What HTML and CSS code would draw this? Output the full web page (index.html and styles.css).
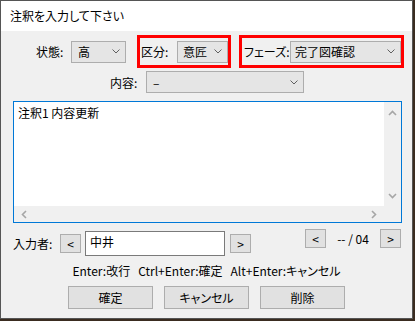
FILE: index.html
```html
<!DOCTYPE html>
<html lang="ja">
<head>
    <meta charset="UTF-8">
    <meta name="viewport" content="width=device-width, initial-scale=1.0">
    <title>注釈を入力して下さい</title>
    <link rel="stylesheet" href="styles.css">
</head>
<body>
    <div class="dialog">
        <div class="titlebar">注釈を入力して下さい</div>

        <div class="content">
            <div class="row row-top">
                <div class="field field-state">
                    <span class="label">状態:</span>
                    <div class="combo combo-state">
                        <span>高</span>
                        <svg class="chevron" width="8" height="5" viewBox="0 0 8 5"><polyline points="0.5,0.5 4,4 7.5,0.5"/></svg>
                    </div>
                </div>
                <div class="field mark mark-kind">
                    <span class="label">区分:</span>
                    <div class="combo combo-kind">
                        <span>意匠</span>
                        <svg class="chevron" width="8" height="5" viewBox="0 0 8 5"><polyline points="0.5,0.5 4,4 7.5,0.5"/></svg>
                    </div>
                </div>
                <div class="field mark mark-phase">
                    <span class="label label-phase">フェーズ:</span>
                    <div class="combo combo-phase">
                        <span>完了図確認</span>
                        <svg class="chevron" width="8" height="5" viewBox="0 0 8 5"><polyline points="0.5,0.5 4,4 7.5,0.5"/></svg>
                    </div>
                </div>
            </div>

            <div class="row row-body">
                <span class="label">内容:</span>
                <div class="combo combo-body">
                    <span>–</span>
                    <svg class="chevron" width="8" height="5" viewBox="0 0 8 5"><polyline points="0.5,0.5 4,4 7.5,0.5"/></svg>
                </div>
            </div>

            <div class="memo">
                <div class="memo-text">注釈1 内容更新</div>
                <div class="vscroll">
                    <svg class="arrow" width="9" height="6" viewBox="0 0 9 6"><polyline points="1,5 4.5,1.5 8,5"/></svg>
                    <svg class="arrow" width="9" height="6" viewBox="0 0 9 6"><polyline points="1,1 4.5,4.5 8,1"/></svg>
                </div>
                <div class="hscroll">
                    <svg class="arrow" width="6" height="9" viewBox="0 0 6 9"><polyline points="5,1 1.5,4.5 5,8"/></svg>
                    <svg class="arrow" width="6" height="9" viewBox="0 0 6 9"><polyline points="1,1 4.5,4.5 1,8"/></svg>
                </div>
                <div class="corner"></div>
            </div>

            <div class="row row-author">
                <div class="author">
                    <span class="label label-author">入力者:</span>
                    <button class="nav">&lt;</button>
                    <div class="name">中井</div>
                    <button class="nav">&gt;</button>
                </div>
                <div class="pager">
                    <button class="nav">&lt;</button>
                    <span class="count">-- / 04</span>
                    <button class="nav">&gt;</button>
                </div>
            </div>

            <div class="hint">Enter:改行&nbsp;&nbsp; Ctrl+Enter:確定&nbsp;&nbsp; Alt+Enter:キャンセル</div>

            <div class="actions">
                <button class="action">確定</button>
                <button class="action">キャンセル</button>
                <button class="action">削除</button>
            </div>
        </div>
    </div>
</body>
</html>
```

FILE: styles.css
```css
* {
    margin: 0;
    padding: 0;
    box-sizing: border-box;
}

body {
    background-color: #3a2c20;
    font-family: 'Noto Sans CJK JP', 'Noto Sans', sans-serif;
    font-size: 12px;
    font-feature-settings: "palt";
    color: #000;
}

button {
    font: inherit;
    color: inherit;
}

.dialog {
    width: 413px;
    height: 319px;
    background-color: #f0f0f0;
    border: 1px solid #555;
}

.titlebar {
    height: 30px;
    line-height: 30px;
    padding-left: 9px;
    background-color: #fff;
}

.row {
    display: flex;
    align-items: center;
}

.label {
    white-space: nowrap;
}

/* top row: state / kind / phase */
.row-top {
    margin-top: 4px;
    padding-left: 35px;
}

.field {
    display: flex;
    align-items: center;
}

.field .label {
    width: 32px;
}

.field-state .combo {
    margin-left: 3px;
}

.mark {
    height: 33px;
    border: 3px solid #f00;
}

.mark .combo {
    margin-left: 4px;
}

.mark-kind {
    margin-left: 11px;
    padding-left: 1px;
}

.mark-phase {
    margin-left: 8px;
    padding-left: 2px;
}

.mark-phase .label {
    width: 42px;
}

.combo {
    display: flex;
    align-items: center;
    justify-content: space-between;
    height: 22px;
    padding: 0 5px 0 6px;
    background-color: #e5e5e5;
    border: 1px solid #adadad;
}

.combo-state {
    width: 55px;
}

.combo-kind {
    width: 51px;
    padding-left: 5px;
}

.combo-phase {
    width: 111px;
    padding-left: 4px;
}

.combo-body {
    width: 158px;
}

.chevron polyline {
    fill: none;
    stroke: #606060;
    stroke-width: 1;
}

/* second row */
.row-body {
    margin-top: 3px;
    padding-left: 109px;
    gap: 4px;
}

.row-body .label {
    width: 32px;
}

/* memo box */
.memo {
    display: grid;
    grid-template-columns: 1fr 17px;
    grid-template-rows: 1fr 16px;
    width: 389px;
    height: 122px;
    margin: 8px 0 0 12px;
    background-color: #fff;
    border: 1px solid #0078d7;
}

.memo-text {
    padding: 3px 4px;
    line-height: 16px;
}

.vscroll {
    display: flex;
    flex-direction: column;
    justify-content: space-between;
    align-items: center;
    padding: 8px 0 7px;
    background-color: #f0f0f0;
}

.hscroll {
    display: flex;
    justify-content: space-between;
    align-items: center;
    padding: 0 7px;
    background-color: #f0f0f0;
}

.corner {
    background-color: #f0f0f0;
}

.arrow polyline {
    fill: none;
    stroke: #a6a6a6;
    stroke-width: 1.6;
}

/* author row */
.row-author {
    align-items: flex-start;
    margin-top: 6px;
    padding: 0 11px 0 12px;
}

.author {
    display: flex;
    align-items: center;
    margin-top: 2px;
}

.label-author {
    width: 47px;
}

.nav {
    width: 21px;
    height: 19px;
    line-height: 16px;
    background-color: #e1e1e1;
    border: 1px solid #adadad;
}

.name {
    width: 140px;
    height: 25px;
    margin: 0 5px 0 4px;
    padding: 0 4px;
    line-height: 20px;
    background-color: #fff;
    border: 1px solid #7a7a7a;
}

.pager {
    display: flex;
    align-items: center;
    justify-content: space-between;
    width: 96px;
    margin-left: auto;
}

.hint {
    margin-top: 7px;
    line-height: 16px;
    text-align: center;
}

.actions {
    display: flex;
    justify-content: center;
    gap: 11px;
    margin-top: 7px;
}

.action {
    width: 85px;
    height: 23px;
    background-color: #e1e1e1;
    border: 1px solid #adadad;
}
```
